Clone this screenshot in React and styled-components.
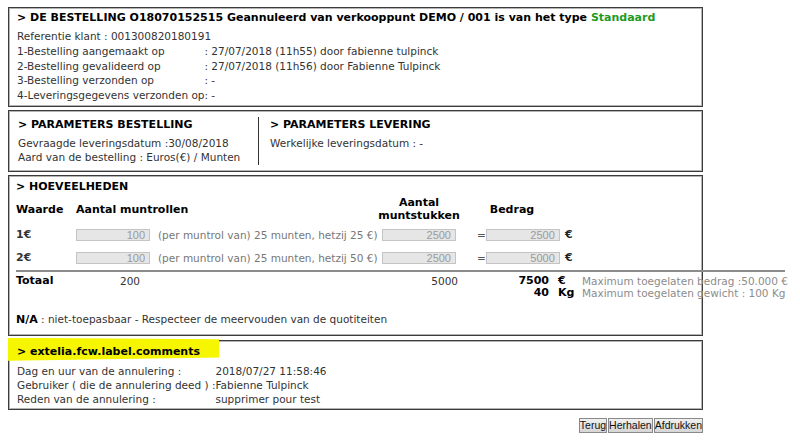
import React from "react";
import styled, { createGlobalStyle } from "styled-components";

const GlobalStyle = createGlobalStyle`
  body {
    margin: 7px 8px;
    background: #ffffff;
    color: #333333;
    font-family: "DejaVu Sans", Verdana, sans-serif;
    font-size: 10.5px;
  }
`;

const Page = styled.div`
  width: 695px;
`;

const Box = styled.section`
  position: relative;
  box-sizing: border-box;
  border: 1px solid #3c3c3c;
  box-shadow: inset 1px 1px 0 #b4b4b4, inset -1px -1px 0 #b4b4b4;
  padding: ${(p) => p.$pt ?? 2}px 8px ${(p) => p.$pb ?? 3}px ${(p) => p.$pl ?? 8}px;
  margin-bottom: ${(p) => p.$mb ?? 3}px;
`;

const Header = styled.h2`
  position: relative;
  z-index: 1;
  margin: 0 0 ${(p) => p.$mb ?? 3}px;
  font-size: 11px;
  line-height: 16px;
  font-weight: bold;
  color: #000000;
  white-space: nowrap;
`;

const Green = styled.span`
  color: #1f9a1f;
`;

const Line = styled.div`
  line-height: 14.75px;
  white-space: nowrap;
`;

const InfoGrid = styled.div`
  position: relative;
  z-index: 1;
  display: grid;
  grid-template-columns: max-content 1fr;
  line-height: ${(p) => p.$lh ?? 14.75}px;
  white-space: nowrap;
`;

const ParamRow = styled.div`
  display: flex;
`;

const ParamCol = styled.div`
  width: ${(p) => p.$w}px;
  box-sizing: border-box;
  padding-left: ${(p) => p.$pl ?? 0}px;
  border-right: ${(p) => (p.$divider ? "1px solid #333" : "none")};
  line-height: 14.5px;
  white-space: nowrap;
`;

const QtyRow = styled.div`
  display: grid;
  grid-template-columns: 60px 304px 94px 84px 24px 1fr;
  width: 769px;
  height: ${(p) => p.$h}px;
  margin-top: ${(p) => p.$mt ?? 0}px;
  align-items: center;
  white-space: nowrap;
`;

const Cell = styled.div`
  display: flex;
  align-items: center;
  justify-content: ${(p) => p.$justify || "flex-start"};
  padding-left: ${(p) => p.$pl ?? 0}px;
  padding-right: ${(p) => p.$pr ?? 0}px;
  font-weight: ${(p) => (p.$bold ? "bold" : "normal")};
  font-size: ${(p) => (p.$bold ? 11 : 10.5)}px;
  color: ${(p) => p.$color || "inherit"};
  text-align: ${(p) => p.$align || "left"};
  line-height: 12px;
`;

const ColHead = styled(Cell)`
  color: #000000;
  font-weight: bold;
  font-size: 11px;
  line-height: 12.5px;
`;

const NumInput = styled.input`
  box-sizing: border-box;
  width: 74px;
  height: 12px;
  margin: 0;
  padding: 0 4px;
  border: 1px solid #c4c4c4;
  background: #e6e6e6;
  color: #9a9a9a;
  font-family: "Liberation Sans", Arial, sans-serif;
  font-size: 11px;
  line-height: 10px;
  text-align: right;
`;

const Note = styled.span`
  margin-left: 8px;
  color: #777777;
`;

const Rule = styled.div`
  width: 769px;
  border-top: 2px solid #8c8c8c;
`;

const Footnote = styled.div`
  margin-top: 13px;
  line-height: 14px;
  white-space: nowrap;
`;

const Strong = styled.b`
  color: #000000;
  font-size: 11px;
`;

const Highlight = styled.div`
  position: absolute;
  left: -6px;
  top: -3px;
  width: 216px;
  height: 23px;
  background: #f6f600;
  clip-path: polygon(0 0, 100% 6%, 100% 86%, 0 100%);
  filter: blur(0.7px);
`;

const ButtonBar = styled.div`
  display: flex;
  justify-content: flex-end;
  gap: 1px;
  margin-top: 8px;
`;

const Button = styled.button`
  height: 15px;
  margin: 0;
  padding: 0;
  border: 1px solid #8a8a8a;
  border-radius: 0;
  background: linear-gradient(#f0f0f0, #d6d6d6);
  color: #111111;
  font-family: "Liberation Sans", Arial, sans-serif;
  font-size: 10.5px;
  line-height: 12px;
`;

const qtyRows = [
  { label: "1€", rolls: "100", amount: "25", coins: "2500", total: "2500" },
  { label: "2€", rolls: "100", amount: "50", coins: "2500", total: "5000" },
];

export default function App() {
  return (
    <Page>
      <GlobalStyle />

      <Box $pt={2} $pb={3} $mb={3}>
        <Header>
          &gt; DE BESTELLING O18070152515 Geannuleerd van verkooppunt DEMO / 001 is van het type{" "}
          <Green>Standaard</Green>
        </Header>
        <Line>Referentie klant : 001300820180191</Line>
        <InfoGrid>
          <span>1-Bestelling aangemaakt op</span>
          <span>: 27/07/2018 (11h55) door fabienne tulpinck</span>
          <span>2-Bestelling gevalideerd op</span>
          <span>: 27/07/2018 (11h56) door Fabienne Tulpinck</span>
          <span>3-Bestelling verzonden op</span>
          <span>: -</span>
          <span>4-Leveringsgegevens verzonden op</span>
          <span>: -</span>
        </InfoGrid>
      </Box>

      <Box $pt={6} $pb={6} $pl={0} $mb={3}>
        <ParamRow>
          <ParamCol $w={250} $pl={9} $divider>
            <Header>&gt; PARAMETERS BESTELLING</Header>
            <div>Gevraagde leveringsdatum :30/08/2018</div>
            <div>Aard van de bestelling : Euros(€) / Munten</div>
          </ParamCol>
          <ParamCol $w={420} $pl={11}>
            <Header>&gt; PARAMETERS LEVERING</Header>
            <div>Werkelijke leveringsdatum : -</div>
          </ParamCol>
        </ParamRow>
      </Box>

      <Box $pt={3} $pb={8} $pl={7} $mb={4}>
        <Header $mb={1}>&gt; HOEVEELHEDEN</Header>
        <QtyRow $h={28}>
          <ColHead>Waarde</ColHead>
          <ColHead>Aantal muntrollen</ColHead>
          <ColHead $justify="center" $align="center" $pr={16}>
            Aantal
            <br />
            muntstukken
          </ColHead>
          <ColHead $justify="center" $pr={8}>
            Bedrag
          </ColHead>
          <div />
          <div />
        </QtyRow>
        {qtyRows.map((r) => (
          <QtyRow key={r.label} $h={23}>
            <Cell $bold>{r.label}</Cell>
            <Cell>
              <NumInput value={r.rolls} disabled readOnly />
              <Note>(per muntrol van) 25 munten, hetzij {r.amount} €)</Note>
            </Cell>
            <Cell $pl={2}>
              <NumInput value={r.coins} disabled readOnly />
            </Cell>
            <Cell $pl={3} $color="#555">
              =<NumInput value={r.total} disabled readOnly />
            </Cell>
            <Cell $pl={7} $bold $color="#222">
              €
            </Cell>
            <div />
          </QtyRow>
        ))}
        <Rule />
        <QtyRow $h={12} $mt={3}>
          <Cell $bold $color="#000">
            Totaal
          </Cell>
          <Cell $pl={44}>200</Cell>
          <Cell $justify="flex-end" $pr={16}>
            5000
          </Cell>
          <Cell $justify="flex-end" $pr={9} $bold $color="#000">
            7500
          </Cell>
          <Cell $bold $color="#000">
            €
          </Cell>
          <Cell $color="#8c8c8c">Maximum toegelaten bedrag :50.000 €</Cell>
        </QtyRow>
        <QtyRow $h={12}>
          <div />
          <div />
          <div />
          <Cell $justify="flex-end" $pr={9} $bold $color="#000">
            40
          </Cell>
          <Cell $bold $color="#000">
            Kg
          </Cell>
          <Cell $color="#8c8c8c">Maximum toegelaten gewicht : 100 Kg</Cell>
        </QtyRow>
        <Footnote>
          <Strong>N/A</Strong> : niet-toepasbaar - Respecteer de meervouden van de quotiteiten
        </Footnote>
      </Box>

      <Box $pt={3} $pb={3} $mb={0}>
        <Highlight />
        <Header $mb={4}>&gt; extelia.fcw.label.comments</Header>
        <InfoGrid $lh={14}>
          <span>Dag en uur van de annulering :</span>
          <span>2018/07/27 11:58:46</span>
          <span>Gebruiker ( die de annulering deed ) :</span>
          <span>Fabienne Tulpinck</span>
          <span>Reden van de annulering :</span>
          <span>supprimer pour test</span>
        </InfoGrid>
      </Box>

      <ButtonBar>
        <Button>Terug</Button>
        <Button>Herhalen</Button>
        <Button>Afdrukken</Button>
      </ButtonBar>
    </Page>
  );
}
